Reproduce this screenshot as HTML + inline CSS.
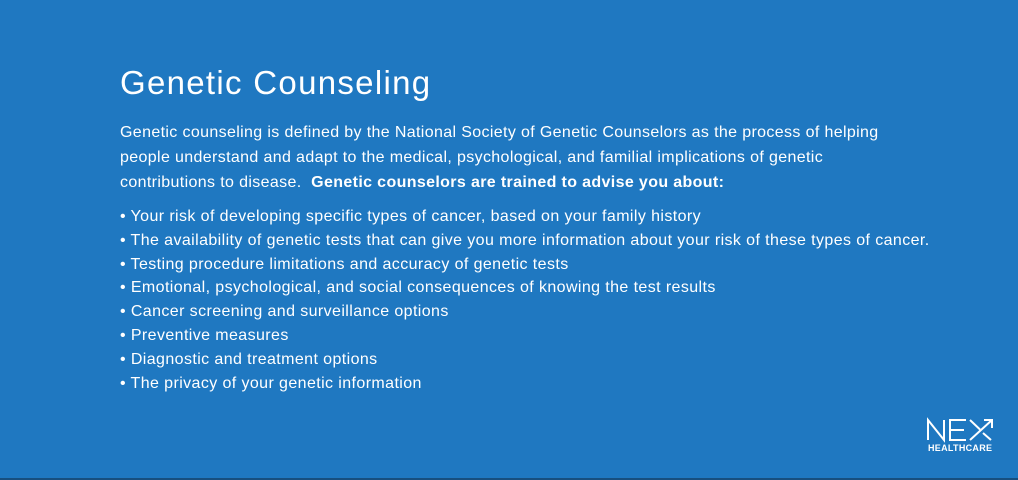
<!DOCTYPE html>
<html><head><meta charset="utf-8"><style>
html,body{margin:0;padding:0}
body{width:1018px;height:480px;background:#1f78c1;position:relative;overflow:hidden;font-family:"Liberation Sans",sans-serif;color:#fff}
h1{position:absolute;left:120px;top:64px;margin:0;font-weight:normal;font-size:33px;letter-spacing:1.3px}
.p{position:absolute;left:120px;top:120px;font-size:16px;line-height:25px;white-space:nowrap;letter-spacing:0.36px}
ul{position:absolute;left:120px;top:205px;margin:0;padding:0;list-style:none;font-size:16px;line-height:23.8px;white-space:nowrap;letter-spacing:0.4px}
.logo{position:absolute;left:926px;top:416px;width:68px}
.bot{position:absolute;left:0;bottom:0;width:1018px;height:2px;background:#174f7f}
</style></head><body>
<h1>Genetic Counseling</h1>
<div class="p">Genetic counseling is defined by the National Society of Genetic Counselors as the process of helping<br>people understand and adapt to the medical, psychological, and familial implications of genetic<br>contributions to disease.&nbsp; <b>Genetic counselors are trained to advise you about:</b></div>
<ul>
<li>• Your risk of developing specific types of cancer, based on your family history</li>
<li>• The availability of genetic tests that can give you more information about your risk of these types of cancer.</li>
<li>• Testing procedure limitations and accuracy of genetic tests</li>
<li>• Emotional, psychological, and social consequences of knowing the test results</li>
<li>• Cancer screening and surveillance options</li>
<li>• Preventive measures</li>
<li>• Diagnostic and treatment options</li>
<li>• The privacy of your genetic information</li>
</ul>
<svg class="logo" width="68" height="38" viewBox="0 0 68 38">
<g fill="none" stroke="#fff" stroke-width="2">
<path d="M2 24V4L18 24V4"/>
<path d="M40 4H24V24H40M24 14H38"/>
<path d="M44 24L66 4M44 4L54 13.5M57 17L65 24M58 4H66V12"/>
</g>
<text x="2" y="35" font-family="Liberation Sans,sans-serif" font-size="9" font-weight="bold" fill="#fff" textLength="64">HEALTHCARE</text>
</svg>
<div class="bot"></div>
</body></html>
